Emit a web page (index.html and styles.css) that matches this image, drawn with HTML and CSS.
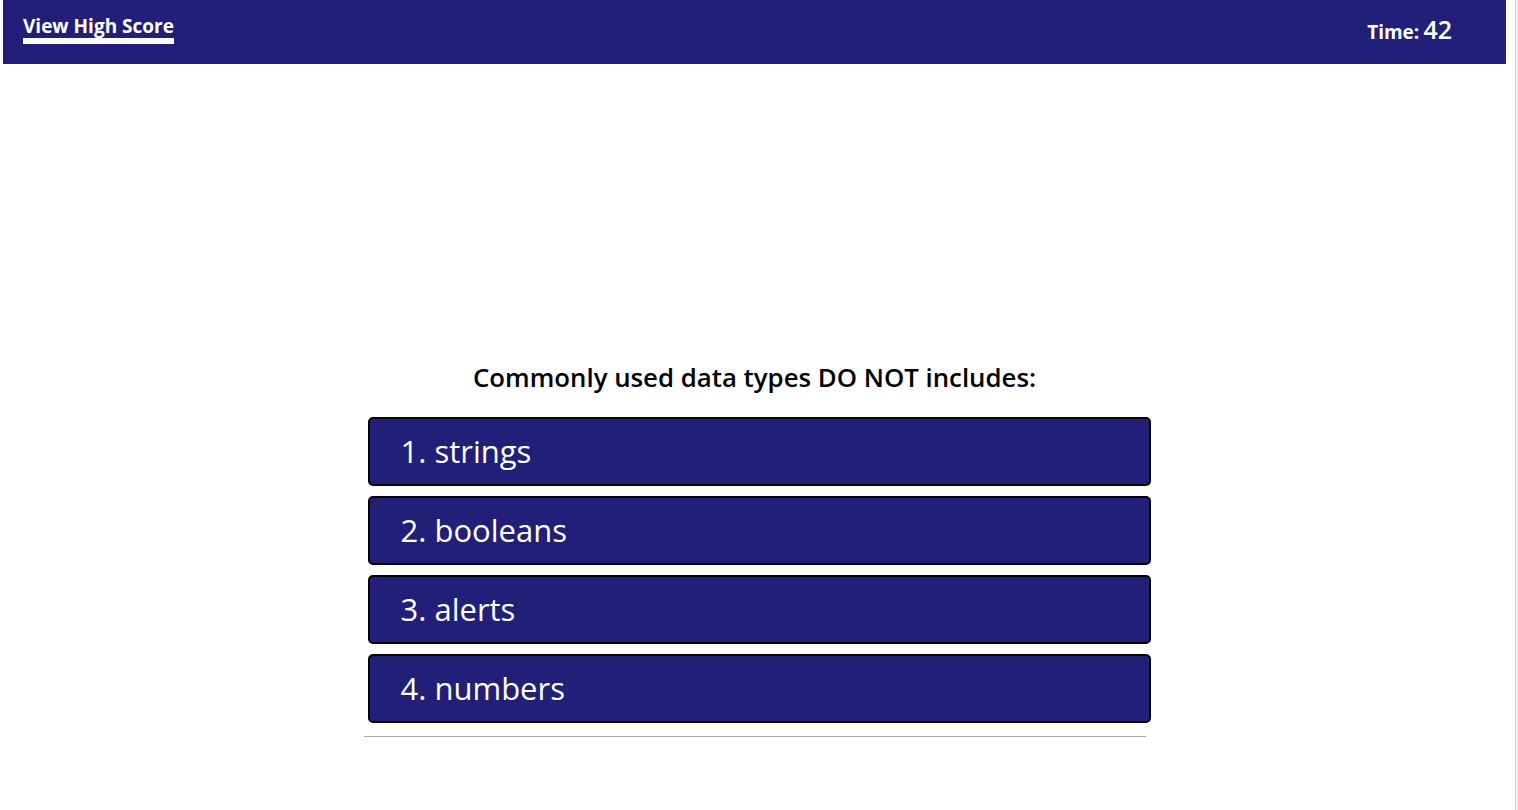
FILE: index.html
```html
<!DOCTYPE html>
<html lang="en">
<head>
<meta charset="utf-8">
<title>Code Quiz</title>
<link rel="stylesheet" href="styles.css">
</head>
<body>
<header class="topbar">
  <a class="highscore" href="#">View High Score</a>
  <div class="timer"><span class="timer-label">Time:</span> <span class="timer-value">42</span></div>
</header>
<main class="quiz">
  <h2 class="question">Commonly used data types DO NOT includes:</h2>
  <div class="choices">
    <button class="choice">1. strings</button>
    <button class="choice">2. booleans</button>
    <button class="choice">3. alerts</button>
    <button class="choice">4. numbers</button>
  </div>
  <hr class="divider">
</main>
<div class="scrollbar"></div>
</body>
</html>
```
FILE: styles.css
```css
html, body {
  margin: 0;
  padding: 0;
  background: #ffffff;
}
body {
  margin: 0 12px 0 3px;
  font-family: "Open Sans", "Noto Sans", sans-serif;
  color: #000;
}
.topbar {
  height: 64px;
  background: #211f77;
  display: flex;
  justify-content: space-between;
  align-items: flex-start;
  padding: 0 54px 0 20px;
}
.highscore {
  margin-top: 15px;
  color: #fff;
  font-weight: 700;
  font-size: 19px;
  line-height: 23px;
  text-decoration: none;
  border-bottom: 6px solid #fff;
  padding-bottom: 0;
}
.timer {
  margin-top: 14px;
  color: #fff;
  line-height: 30px;
}
.timer-label {
  font-weight: 700;
  font-size: 19px;
}
.timer-value {
  font-size: 25px;
  font-weight: 600;
}
.quiz {
  width: 782px;
  margin: 0 auto;
  padding-top: 293px;
}
.question {
  margin: 0;
  text-align: center;
  font-size: 25.8px;
  font-weight: 600;
  line-height: 40px;
}
.choices {
  margin-top: 20px;
  display: flex;
  flex-direction: column;
  gap: 10px;
}
.choice {
  margin-left: 4px;
  width: 783px;
  height: 69px;
  box-sizing: border-box;
  border: 2px solid #000;
  border-radius: 5px;
  background: #211f77;
  color: #fff;
  font-family: "Open Sans", "Noto Sans", sans-serif;
  font-size: 31px;
  text-align: left;
  padding: 0 0 0 31px;
  line-height: 1;
}
.divider {
  margin: 13px 0 0;
  border: 0;
  border-top: 1px solid #a8a8a8;
  height: 0;
}
.scrollbar {
  position: fixed;
  top: 0;
  right: 0;
  width: 2px;
  height: 100%;
  background: #f1f1f1;
  border-left: 1px solid #cfcfcf;
}
```
